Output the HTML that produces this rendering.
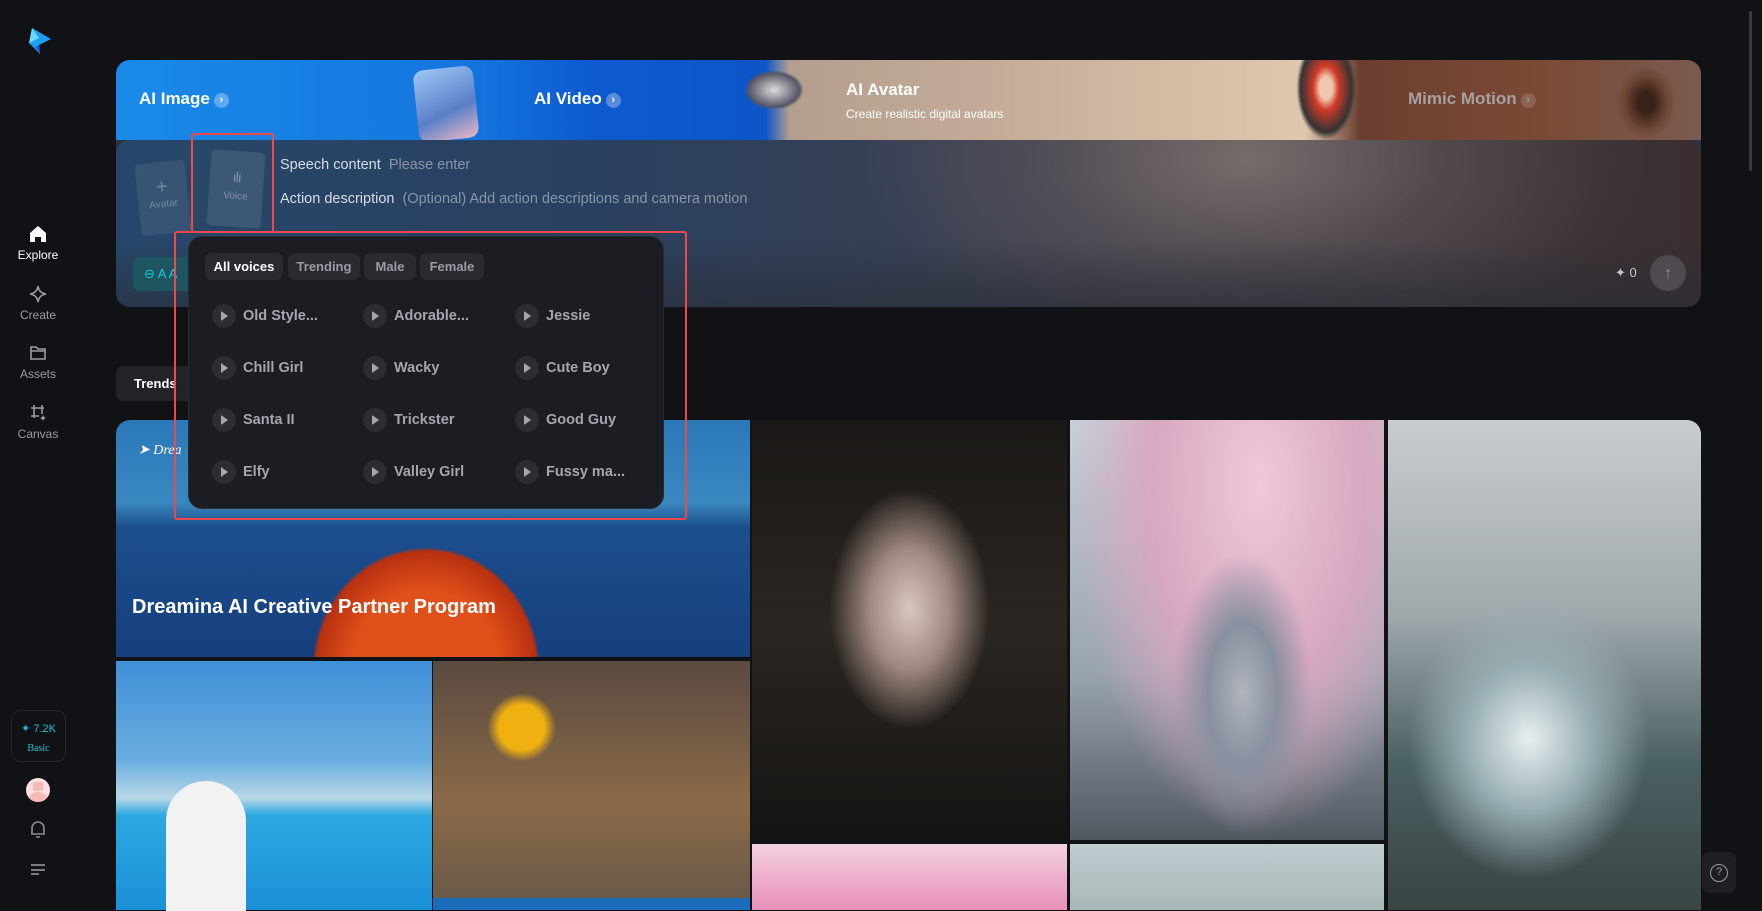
<!DOCTYPE html>
<html><head><meta charset="utf-8"><style>
*{box-sizing:border-box;margin:0;padding:0}
body{width:1762px;height:910px;overflow:hidden;background:#111216;font-family:"Liberation Sans",sans-serif;position:relative;color:#fff}
.abs{position:absolute}
.nav{position:absolute;left:0;width:76px;text-align:center;font-size:12px;color:#9a9ca3}
.nav svg{display:block;margin:0 auto 4px}
.bn{font-weight:bold;font-size:17px;position:absolute}
.chev{display:inline-block;width:15px;height:15px;border-radius:50%;background:rgba(255,255,255,.3);vertical-align:1px;margin-left:4px;font-size:11px;line-height:15px;text-align:center;color:#fff}
.tab{position:absolute;top:253px;height:27px;border-radius:7px;background:#2a2b31;color:#9a9ca3;font-size:13px;font-weight:bold;line-height:27px;text-align:center}
.v{position:absolute;font-size:14.5px;font-weight:bold;color:#a4a6ad;height:24px;line-height:24px}
.v i{position:absolute;left:-31px;top:0;width:24px;height:24px;border-radius:50%;background:#2b2d33}
.v i:after{content:"";position:absolute;left:9px;top:7px;border-left:7px solid #a4a6ad;border-top:5px solid transparent;border-bottom:5px solid transparent}
</style></head><body>
<svg class="abs" style="left:27px;top:27px" width="26" height="28" viewBox="0 0 26 28"><path d="M5 1 L24 12 L12 18 L13 27 L2 16 Z" fill="#1aa0ef"/><path d="M5 1 L12 11 L2 16 Z" fill="#6fd8ff"/><path d="M12 18 L13 27 L8 20Z" fill="#2460e0"/></svg>
<div class="nav" style="top:224px;color:#fff"><svg width="20" height="20" viewBox="0 0 20 20"><path d="M2 9 L10 2 L18 9 V18 H13 V13 H7 V18 H2Z" fill="#fff"/></svg>Explore</div>
<div class="nav" style="top:284px"><svg width="20" height="20" viewBox="0 0 20 20"><path d="M10 2 Q11 9 18 10 Q11 11 10 18 Q9 11 2 10 Q9 9 10 2Z" fill="none" stroke="#9a9ca3" stroke-width="1.6"/></svg>Create</div>
<div class="nav" style="top:343px"><svg width="20" height="20" viewBox="0 0 20 20"><path d="M3 4 H8 L10 6 H17 V16 H3Z M3 8 H17" fill="none" stroke="#9a9ca3" stroke-width="1.6"/></svg>Assets</div>
<div class="nav" style="top:403px"><svg width="20" height="20" viewBox="0 0 20 20"><path d="M6 2 V15 M3 5 H16 M14 2 V11 M3 13 H11" fill="none" stroke="#9a9ca3" stroke-width="1.6"/><path d="M15 12 l1 2 2 1 -2 1 -1 2 -1 -2 -2 -1 2 -1z" fill="#9a9ca3"/></svg>Canvas</div>
<div class="abs" style="left:11px;top:710px;width:55px;height:52px;border:1px solid #26272c;border-radius:10px;text-align:center;color:#19c3d6;font-size:11px;padding-top:9px;line-height:19px">✦ 7.2K<br><span style="font-family:'Liberation Serif',serif;font-size:10px">Basic</span></div>
<div class="abs" style="left:26px;top:778px;width:24px;height:24px;border-radius:50%;background:#fde0df;overflow:hidden"><div class="abs" style="left:7px;top:4px;width:10px;height:9px;background:#f7b8b8;border-radius:2px"></div><div class="abs" style="left:3px;top:14px;width:18px;height:14px;background:#f7b8b8;border-radius:50%"></div></div>
<svg class="abs" style="left:29px;top:820px" width="18" height="19" viewBox="0 0 18 19"><path d="M3 14 V8 a6 6 0 0 1 12 0 V14 H2 H16 M7 17 H11" fill="none" stroke="#8a8c93" stroke-width="1.6"/></svg>
<svg class="abs" style="left:30px;top:863px" width="16" height="12"><path d="M1 2 H15 M1 7 H15 M1 11 H9" stroke="#8a8c93" stroke-width="1.8"/></svg>

<div class="abs" style="left:116px;top:60px;width:1585px;height:247px;border-radius:14px;overflow:hidden;background:#2a3344">
 <div class="abs" style="left:0;top:0;width:1585px;height:80px;background:linear-gradient(90deg,#1a8ae8 0%,#1476df 22%,#0d5ad0 30%,#0c56c8 41%,#b49e8e 42.5%,#c4ab98 55%,#dfc8ae 75%,#6a3e2f 78.5%,#7a4a35 90%,#7a5a50 100%)"></div>
 <div class="abs" style="left:300px;top:8px;width:60px;height:72px;border-radius:10px;background:linear-gradient(160deg,#9ec6f5,#5a7fc8 60%,#e8b8c8);transform:rotate(-6deg)"></div>
 <div class="abs" style="left:628px;top:10px;width:60px;height:40px;border-radius:50%;background:radial-gradient(#ddd,#556 60%,transparent 70%)"></div>
 <div class="abs" style="left:1180px;top:0;width:60px;height:80px;background:radial-gradient(ellipse at 50% 35%,#f0c8b0 15%,#d03a28 30%,#333 60%,transparent 70%)"></div>
 <div class="abs" style="left:1500px;top:5px;width:60px;height:75px;background:radial-gradient(ellipse,#3a2218 20%,rgba(100,60,40,.6) 50%,transparent 70%)"></div>
 <div class="bn" style="left:23px;top:29px">AI Image<span class="chev">›</span></div>
 <div class="bn" style="left:418px;top:29px">AI Video<span class="chev">›</span></div>
 <div class="bn" style="left:730px;top:20px">AI Avatar</div>
 <div class="abs" style="left:730px;top:47px;font-size:12px;color:#fff">Create realistic digital avatars</div>
 <div class="bn" style="left:1292px;top:29px;color:#a8a0a0">Mimic Motion<span class="chev" style="background:rgba(255,255,255,.15);color:#a8a0a0">›</span></div>
 <div class="abs" style="left:0;top:80px;width:1585px;height:167px;border-radius:14px;background:radial-gradient(ellipse 400px 200px at 1130px 20px,#766c6a,rgba(110,100,100,.4) 50%,transparent 100%),linear-gradient(90deg,#27476a 0%,#2a4060 30%,#403e4a 65%,#3a2e30 100%)"></div>
 <div class="abs" style="left:0;top:180px;width:1585px;height:67px;background:linear-gradient(180deg,rgba(40,44,52,0),rgba(40,44,52,.6))"></div>
</div>
<div class="abs" style="left:138px;top:162px;width:50px;height:72px;border-radius:4px;background:rgba(255,255,255,.08);transform:rotate(-6deg);text-align:center;color:rgba(255,255,255,.3);font-size:10px;padding-top:14px"><div style="font-size:20px">+</div>Avatar</div>
<div class="abs" style="left:209px;top:151px;width:54px;height:76px;border-radius:4px;background:rgba(255,255,255,.1);transform:rotate(4deg);text-align:center;color:rgba(255,255,255,.35);font-size:10px;padding-top:18px"><div style="font-size:14px;letter-spacing:-1px">ılı</div><div style="margin-top:6px">Voice</div></div>
<div class="abs" style="left:191px;top:133px;width:83px;height:100px;border:2px solid #f04848;border-radius:3px"></div>
<div class="abs" style="left:280px;top:157px;font-size:14.5px;color:#d8dce4">Speech content <span style="color:#8896a8;margin-left:4px">Please enter</span></div>
<div class="abs" style="left:280px;top:191px;font-size:14.5px;color:#d8dce4">Action description <span style="color:#8896a8;margin-left:4px">(Optional) Add action descriptions and camera motion</span></div>
<div class="abs" style="left:133px;top:257px;width:70px;height:34px;border-radius:7px;background:#1d5560;color:#1ec8d8;font-size:13px;line-height:34px;padding-left:11px">⊖ A A</div>
<div class="abs" style="left:1615px;top:265px;font-size:13px;color:#c8c8cc">✦ 0</div>
<div class="abs" style="left:1650px;top:255px;width:36px;height:36px;border-radius:50%;background:#4e4a50;color:#8e8a90;text-align:center;line-height:36px;font-size:18px">↑</div>

<div class="abs" style="left:116px;top:366px;width:80px;height:35px;border-radius:7px;background:#222328;font-size:13px;font-weight:bold;line-height:35px;padding-left:18px">Trends</div>

<div class="abs" style="left:116px;top:420px;width:634px;height:237px;border-radius:14px 0 0 0;overflow:hidden;background:linear-gradient(180deg,#2a78b8 0%,#3a88c0 35%,#1c4e8e 45%,#163f7c 100%)">
 <div class="abs" style="left:180px;top:110px;width:260px;height:140px;background:radial-gradient(ellipse at 50% 100%,#e0501a 40%,#b83010 60%,transparent 62%)"></div>
 <div class="abs" style="left:22px;top:22px;font-size:14px;font-style:italic;font-family:'Liberation Serif',serif">➤ Drea</div>
 <div class="abs" style="left:16px;top:176px;font-size:20px;font-weight:bold">Dreamina AI Creative Partner Program</div>
</div>
<div class="abs" style="left:116px;top:661px;width:316px;height:249px;background:linear-gradient(180deg,#3f8fd8 0%,#6aaee0 40%,#b8d8e8 55%,#2ca8e0 62%,#1a90d8 100%)"><div class="abs" style="left:50px;top:120px;width:80px;height:130px;border-radius:40px 40px 0 0;background:#f2f2f2"></div></div>
<div class="abs" style="left:433px;top:661px;width:317px;height:237px;background:radial-gradient(circle at 28% 28%,#f0b010 8%,transparent 12%),linear-gradient(180deg,#5a4a40,#8a6a48 60%,#6a5a48)"></div>
<div class="abs" style="left:433px;top:898px;width:317px;height:12px;background:#1a6cb8"></div>
<div class="abs" style="left:752px;top:420px;width:315px;height:420px;background:radial-gradient(ellipse 80px 120px at 50% 45%,#d8c8c0,#a08880 50%,transparent 100%),linear-gradient(180deg,#1a1816,#2a2622 50%,#151412)"></div>
<div class="abs" style="left:752px;top:844px;width:315px;height:66px;background:linear-gradient(180deg,#f4d0e0,#e890b8)"></div>
<div class="abs" style="left:1070px;top:420px;width:314px;height:420px;background:radial-gradient(ellipse 70px 140px at 55% 65%,#b0b4bc,#8890a0 50%,transparent 100%),radial-gradient(ellipse at 60% 15%,#f0c8d8,#d8a8c0 40%,transparent 70%),linear-gradient(180deg,#c8d0d8,#9aa4b0 60%,#505860)"></div>
<div class="abs" style="left:1070px;top:844px;width:314px;height:66px;background:linear-gradient(180deg,#c0ccd0,#a8b8b8)"></div>
<div class="abs" style="left:1388px;top:420px;width:313px;height:490px;border-radius:0 14px 0 0;background:radial-gradient(ellipse 120px 140px at 45% 65%,#e8eef0,#9ab0b4 50%,transparent 100%),linear-gradient(180deg,#c8ccd0,#a0a8ac 40%,#4a6062 70%,#3a4444)"></div>
<div class="abs" style="left:1702px;top:852px;width:34px;height:41px;border-radius:8px;background:#1e1f24"><div class="abs" style="left:8px;top:12px;width:18px;height:18px;border-radius:50%;border:1.5px solid #9a9ca3;color:#9a9ca3;font-size:11px;text-align:center;line-height:15px">?</div></div>
<div class="abs" style="left:1749px;top:11px;width:3px;height:160px;border-radius:2px;background:#3a3b40"></div>

<div class="abs" style="left:188px;top:236px;width:476px;height:273px;border-radius:14px;background:#1c1d22;border:1px solid #2a2b31"></div>
<div class="tab" style="left:205px;width:78px;color:#fff">All voices</div>
<div class="tab" style="left:288px;width:72px">Trending</div>
<div class="tab" style="left:364px;width:52px">Male</div>
<div class="tab" style="left:420px;width:64px">Female</div>
<div class="v" style="left:243px;top:304px"><i></i>Old Style...</div>
<div class="v" style="left:394px;top:304px"><i></i>Adorable...</div>
<div class="v" style="left:546px;top:304px"><i></i>Jessie</div>
<div class="v" style="left:243px;top:356px"><i></i>Chill Girl</div>
<div class="v" style="left:394px;top:356px"><i></i>Wacky</div>
<div class="v" style="left:546px;top:356px"><i></i>Cute Boy</div>
<div class="v" style="left:243px;top:408px"><i></i>Santa II</div>
<div class="v" style="left:394px;top:408px"><i></i>Trickster</div>
<div class="v" style="left:546px;top:408px"><i></i>Good Guy</div>
<div class="v" style="left:243px;top:460px"><i></i>Elfy</div>
<div class="v" style="left:394px;top:460px"><i></i>Valley Girl</div>
<div class="v" style="left:546px;top:460px"><i></i>Fussy ma...</div>
<div class="abs" style="left:174px;top:231px;width:513px;height:289px;border:2.5px solid #f04848;border-radius:3px"></div>
</body></html>
